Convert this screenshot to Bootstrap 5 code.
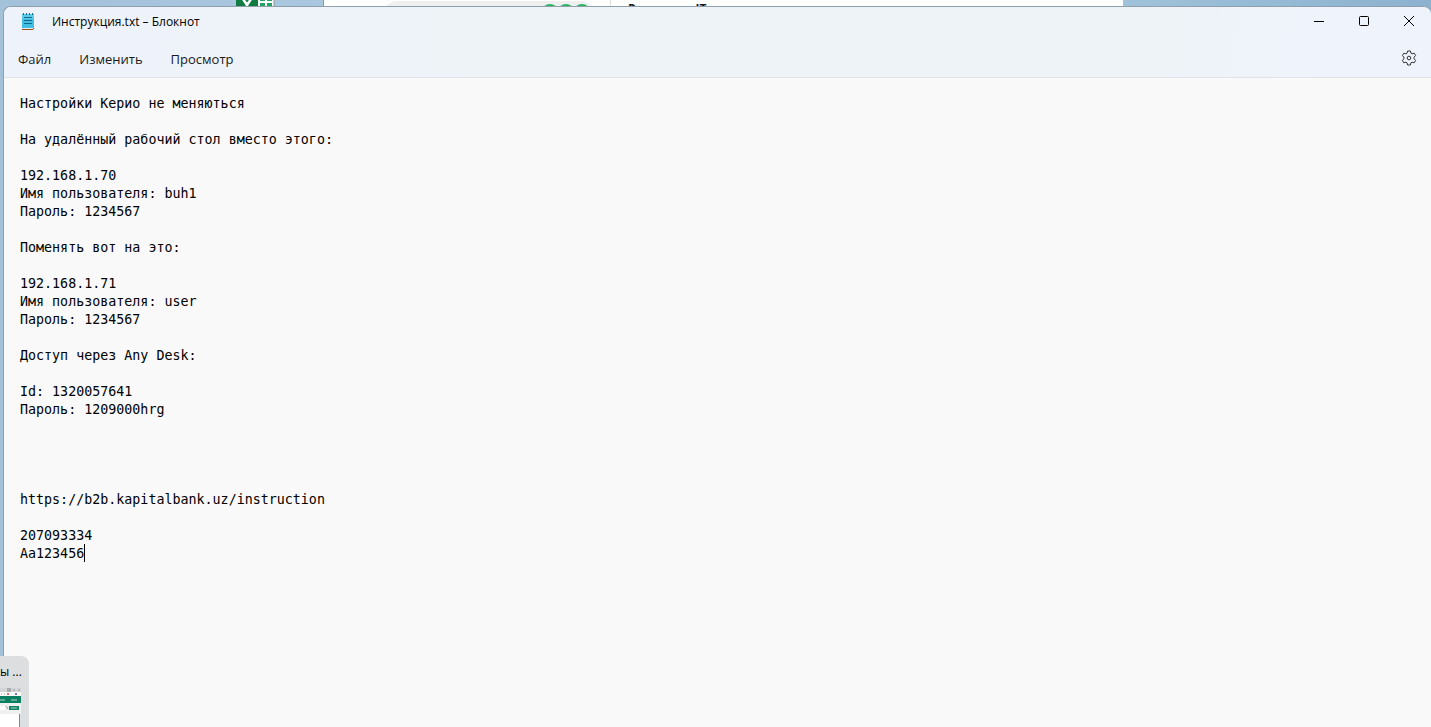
<!DOCTYPE html>
<html lang="ru">
<head>
<meta charset="utf-8">
<meta name="viewport" content="width=device-width, initial-scale=1">
<title>Инструкция.txt – Блокнот</title>
<link href="https://cdn.jsdelivr.net/npm/bootstrap@5.3.0/dist/css/bootstrap.min.css" rel="stylesheet">
<style>
  body { font-family: "Open Sans", "Noto Sans", sans-serif; color: #1a1a1a; }
  .desktop { background: linear-gradient(90deg, #a3c2da 0, #a9c8df 320px, #a0c2da 78%, #8db2cf 100%); padding-left: 3px; }
  .behind { height: 6px; }
  .sheet-tile { margin-left: 233px; width: 39px; }
  .back-window { margin-left: 48px; width: 56%; border-left: 1px solid #8f9aa5; }
  .search-pill { margin: 1px 0 0 58px; width: 214px; height: 32px; border-radius: 16px; background: #efefef; padding: 3px 5px 0 0; }
  .ring { width: 18px; height: 18px; border: 2px solid #28b463; margin-left: -2px; background: #efefef; }
  .back-title { margin-left: 14px; padding-left: 17px; border-left: 1px solid #dedede; font-size: 12px; line-height: 18px; gap: 60px; }
  .notepad { border: 1px solid #8f9fae; border-right: 0; border-bottom: 0; border-radius: 8px 8px 0 0; background: #f9f9f9; }
  .chrome { background: linear-gradient(100deg, #eef3fb 0, #eef3fa 20%, #eef3f7 45%, #eef3f7 75%, #eff3fb 92%); border-bottom: 1px solid #e0e4e8; }
  .title-row { height: 32px; padding-left: 17px; }
  .title-text { font-size: 12px; line-height: 16px; margin-left: 17px; padding-top: 2px; color: #000; }
  .win-btn { width: 45px; height: 28px; }
  .plain-btn { border: 0; background: transparent; padding: 0; color: #1a1a1a; display: flex; align-items: center; justify-content: center; }
  .plain-btn:hover { background: #e2e8f0; }
  .menu-row { height: 38px; padding-left: 3px; }
  .menu-btn { font-size: 13px; line-height: 20px; height: 32px; padding: 2px 11px 0; margin-right: 6px; border-radius: 4px; }
  .page-text { display: block; resize: none; border: 0; outline: 0; background: transparent; color: #000; padding: 17px 16px; }
  .page-text, .caret-layer { font-family: "DejaVu Sans Mono", "Liberation Mono", monospace; font-size: 10pt; line-height: 18px; }
  .caret-layer { position: absolute; top: calc(16px + 25 * 18px); left: calc(16px + 8ch); width: 1px; height: 18px; background: #000; }
  .preview { left: 0; bottom: 0; width: 29px; height: 71px; background: #dddedf; border-radius: 0 8px 0 0; }
  .preview-title { font-size: 12px; line-height: 16px; padding: 8px 9px 0 0; color: #000; }
  .preview svg { margin-top: 8px; }
</style>
<script src="https://cdn.jsdelivr.net/npm/bootstrap@5.3.0/dist/js/bootstrap.bundle.min.js"></script>
</head>
<body>
<div class="desktop vh-100 d-flex flex-column overflow-hidden position-relative">
  <div class="behind d-flex overflow-hidden flex-shrink-0" aria-hidden="true">
    <svg class="sheet-tile flex-shrink-0" height="6" viewBox="0 0 39 6">
      <path d="M0 0H22V6H0z" fill="#107c41"/>
      <path d="M22 0H38V6H22z" fill="#fff"/>
      <path d="M24 0h5v1h-5zM31 0h5v1h-5zM24 3h5v3h-5zM31 3h5v3h-5z" fill="#21a366"/>
      <path d="M7 -1l4 6v2M15 -1l-4 6" stroke="#fff" stroke-width="2.500" fill="none"/>
      <path d="M38 0V6" stroke="#8a979f"/>
    </svg>
    <div class="back-window bg-white d-flex align-items-start">
      <div class="search-pill d-flex justify-content-end flex-shrink-0">
        <span class="ring rounded-circle"></span><span class="ring rounded-circle"></span><span class="ring rounded-circle"></span>
      </div>
      <div class="back-title d-flex fw-bold"><span>Р</span><span>IT</span></div>
    </div>
  </div>

  <main class="notepad flex-grow-1 d-flex flex-column overflow-hidden">
    <header class="chrome">
      <div class="title-row d-flex align-items-start justify-content-between">
        <div class="d-flex align-items-center pt-1">
          <svg width="14" height="20" viewBox="0 0 14 20" aria-hidden="true">
            <path d="M1 3h12v14H1z" fill="#42bfe0"/>
            <path d="M1 3h12v5H1z" fill="#5dcbe7"/>
            <path d="M2.500 2v2M5.500 2v2M8.500 2v2M11.500 2v2" stroke="#17698c"/>
            <path d="M3 6.500h8M3 9.500h8M3 12.500h8" stroke="#11698e"/>
            <path d="M1 17h11v1H1z" fill="#e8eef2"/>
            <path d="M1 18.500h11l1-1.500" stroke="#a14c16" fill="none"/>
          </svg>
          <span class="title-text">Инструкция.txt – Блокнот</span>
        </div>
        <div class="d-flex">
          <button class="plain-btn win-btn" type="button" aria-label="Свернуть">
            <svg width="12" height="12" viewBox="0 0 12 12"><path d="M1 6.500h10" stroke="#000"/></svg>
          </button>
          <button class="plain-btn win-btn" type="button" aria-label="Развернуть">
            <svg width="12" height="12" viewBox="0 0 12 12"><rect x="1.500" y="1.500" width="9" height="9" rx="1" fill="none" stroke="#000"/></svg>
          </button>
          <button class="plain-btn win-btn" type="button" aria-label="Закрыть">
            <svg width="12" height="12" viewBox="0 0 12 12"><path d="M1 1l10 10M11 1L1 11" stroke="#000"/></svg>
          </button>
        </div>
      </div>
      <nav class="menu-row d-flex align-items-center">
        <button class="plain-btn menu-btn" type="button">Файл</button>
        <button class="plain-btn menu-btn" type="button">Изменить</button>
        <button class="plain-btn menu-btn" type="button">Просмотр</button>
        <button class="plain-btn win-btn ms-auto" type="button" aria-label="Параметры">
          <svg width="16" height="16" viewBox="0 0 16 16" fill="none" stroke="#333" stroke-linejoin="round">
            <path d="M6.600 1h2.800l.5 2.100 1.200.7 2.100-.6 1.400 2.400-1.500 1.500v1.800l1.500 1.500-1.400 2.400-2.100-.6-1.200.7-.5 2.100H6.600l-.5-2.100-1.200-.7-2.100.6-1.400-2.400 1.500-1.500V7.100L1.400 5.600l1.400-2.400 2.100.6 1.200-.7z"/>
            <circle cx="8" cy="8" r="1.800"/>
          </svg>
        </button>
      </nav>
    </header>
    <div class="flex-grow-1 position-relative">
      <textarea class="page-text w-100 h-100 overflow-hidden" aria-label="Текст документа" spellcheck="false">Настройки Керио не меняються

На удалённый рабочий стол вместо этого:

192.168.1.70
Имя пользователя: buh1
Пароль: 1234567

Поменять вот на это:

192.168.1.71
Имя пользователя: user
Пароль: 1234567

Доступ через Any Desk:

Id: 1320057641
Пароль: 1209000hrg




https://b2b.kapitalbank.uz/instruction

207093334
Aa123456</textarea>
      <span class="caret-layer"></span>
    </div>
  </main>

  <aside class="preview position-absolute overflow-hidden">
    <div class="preview-title text-end text-nowrap">ы ...</div>
    <svg class="d-block" width="21" height="39" viewBox="0 0 21 39" aria-hidden="true">
      <path d="M0 0h21v5H0z" fill="#d3d5d8"/>
      <path d="M7 0h4v4H7z" fill="#a9abae"/>
      <path d="M13 2h2M18 2h2" stroke="#999"/>
      <path d="M0 4h21v4H0z" fill="#fafafa"/>
      <path d="M1 6h1M4 6h1" stroke="#999"/>
      <path d="M7 6h2" stroke="#d77" stroke-width="2"/>
      <path d="M15 6h2" stroke="#7676d8" stroke-width="2"/>
      <path d="M0 8h21v7H0z" fill="#087f60"/>
      <path d="M0 12h5M11 12h6" stroke="#acd4c7"/>
      <path d="M0 15h21v11H0z" fill="#eef1f0"/>
      <path d="M0 18h5v4H0z" fill="#fff"/>
      <path d="M6 18l2 3" stroke="#999"/>
      <path d="M9 18h10v4H9z" fill="#148564"/>
      <path d="M11 20h6" stroke="#a1d1c1"/>
      <path d="M0 26h19v13H0z" fill="#fff"/>
      <path d="M19.500 26v13" stroke="#888"/>
    </svg>
  </aside>
</div>
</body>
</html>
